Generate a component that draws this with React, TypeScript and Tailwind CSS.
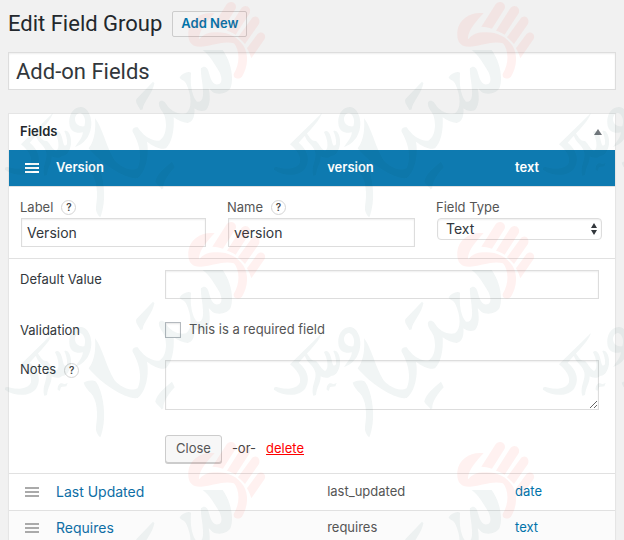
import type { ReactNode } from "react";

type FieldRow = { label: string; name: string; type: string };

const inputClass =
  "w-full border border-[#dddddd] bg-white text-[#32373c] shadow-[inset_0_1px_2px_rgba(0,0,0,0.07)] outline-none";

const collapsedFields: FieldRow[] = [
  { label: "Last Updated", name: "last_updated", type: "date" },
  { label: "Requires", name: "requires", type: "text" },
];

function Help() {
  return (
    <button
      type="button"
      aria-label="Help"
      className="flex size-[15px] items-center justify-center rounded-full border border-[#d5d5d5] text-[10px] font-semibold leading-none text-[#444444]"
    >
      ?
    </button>
  );
}

function Handle() {
  return (
    <svg viewBox="0 0 14 10" className="ml-4 block h-[10px] w-[14px]" fill="currentColor" aria-hidden="true">
      <rect width="14" height="2" />
      <rect y="4" width="14" height="2" />
      <rect y="8" width="14" height="2" />
    </svg>
  );
}

function TopField({ id, label, help, children }: { id: string; label: string; help?: boolean; children: ReactNode }) {
  return (
    <div>
      <div className="flex h-4 items-center gap-2 text-[13px] leading-4 text-[#555555]">
        <label htmlFor={id}>{label}</label>
        {help && <Help />}
      </div>
      <div className="mt-[3px] pl-px">{children}</div>
    </div>
  );
}

function Watermark() {
  return (
    <svg className="pointer-events-none absolute inset-0 size-full" aria-hidden="true">
      <defs>
        <pattern id="mark" x="1" y="0" width="269" height="220" patternUnits="userSpaceOnUse">
          <g fill="#ff2a1a" opacity="0.065" transform="translate(42 0) scale(0.3333)">
            <path d="M515 40C480 34 440 55 436 95C434 126 445 141 475 140C510 138 540 122 573 130C590 150 592 190 572 222C570 237 588 240 597 230C612 205 620 170 602 138C580 105 548 92 500 98C485 101 478 108 468 118C465 95 495 60 515 40Z" />
            <path d="M508 80L550 14C560 -2 584 8 578 26L540 86C530 82 518 80 508 80Z" />
            <path d="M552 92L594 26C605 8 628 22 620 40L578 104C570 99 562 95 552 92Z" />
            <path d="M585 112L625 57C637 40 655 55 648 72L606 132C600 125 592 118 585 112Z" />
            <path d="M612 145L643 103C655 90 672 103 665 117L625 175C622 165 618 155 612 145Z" />
          </g>
          <g fill="#003838" opacity="0.055">
            <g transform="translate(70 40) scale(0.3333)">
              <path d="M395 30L455 30C480 65 490 115 478 145C468 162 440 165 425 156C418 150 415 145 413 145C418 170 418 195 405 210C393 216 380 212 370 205C372 225 368 245 350 249C335 248 320 240 308 232C310 265 305 305 285 325C270 330 245 318 228 305C235 345 225 395 200 414C165 420 90 370 53 325C70 305 75 270 72 235C95 265 105 320 130 360C150 385 185 395 200 385C215 350 205 310 185 275C183 265 190 260 200 262C215 285 240 305 265 302C285 290 290 255 280 225C272 210 262 200 264 188C268 180 275 180 283 188C295 210 320 225 345 220C365 205 362 165 345 130C340 120 328 120 326 112C335 100 350 93 360 98C358 130 360 165 378 185C392 188 398 175 396 150C395 125 388 100 390 85C400 75 410 80 414 100C420 125 430 138 445 132C455 125 452 110 445 95C430 70 415 45 395 30Z" />
              <path d="M246 125L196 178C192 190 205 200 208 210L215 208C215 190 245 160 250 130Z" />
              <path d="M303 365C285 380 255 405 253 425C258 435 268 440 272 448L277 445C275 425 295 400 311 382Z" />
              <path d="M38 368C50 360 68 360 75 365C95 395 103 450 98 490C95 510 92 522 88 532C80 525 74 515 75 500C82 460 78 420 60 400C50 390 42 380 38 368Z" />
            </g>
            <g transform="translate(0 95) scale(0.3333)">
              <path d="M156 54C150 75 118 108 86 143C108 160 122 188 108 216C94 246 40 246 12 224C10 216 16 214 28 218C55 226 84 220 90 202C94 184 80 164 60 148Z" />
              <path d="M104 110C118 118 120 140 138 138C150 150 156 165 166 168C178 160 172 130 162 112C170 102 180 112 184 132C188 150 190 158 198 148C200 132 194 118 190 108C202 102 212 124 210 146C208 166 196 184 184 182C174 192 160 188 152 184C152 204 140 218 138 240L130 242C124 222 132 206 136 188C140 166 128 156 116 142C108 132 102 122 104 110Z" />
              <path
                fillRule="evenodd"
                d="M206 92C200 60 218 34 242 36C270 42 280 90 262 122C252 140 238 150 222 156C230 144 244 130 246 112C224 116 210 108 206 92ZM222 72C222 88 236 96 250 94C256 76 250 58 238 54C228 54 222 62 222 72Z"
              />
              <path d="M170 224C170 206 180 200 190 208L200 204L196 214L180 216L176 228Z" />
            </g>
          </g>
        </pattern>
      </defs>
      <rect width="100%" height="100%" fill="url(#mark)" />
    </svg>
  );
}

export default function App() {
  return (
    <div className="relative h-screen overflow-hidden bg-[#f1f1f1] px-2 pt-[11px] font-['Inter',sans-serif] text-[13px] text-[#444444]">
      <div className="flex items-center gap-[10px]">
        <h1 className="font-['Roboto','Liberation_Sans',sans-serif] text-[22px] leading-[26px] text-[#23282d]">Edit Field Group</h1>
        <button
          type="button"
          className="h-[26px] rounded-[2px] border border-[#cccccc] bg-[#f3f3f3] px-2 text-[13px] font-semibold text-[#0073aa]"
        >
          Add New
        </button>
      </div>

      <input
        type="text"
        aria-label="Field group title"
        defaultValue="Add-on Fields"
        className={`${inputClass} mt-[15px] block h-[38px] px-[7px] font-['Roboto','Liberation_Sans',sans-serif] text-[22px]`}
      />

      <section className="mt-[23px] border border-[#e5e5e5] bg-white shadow-[0_1px_1px_rgba(0,0,0,0.04)]">
        <header className="flex h-9 items-center justify-between pl-[11px] pr-[13px]">
          <h2 className="text-[13px] font-semibold text-[#23282d]">Fields</h2>
          <button type="button" aria-label="Toggle panel" className="text-[#72777c]">
            <svg viewBox="0 0 8 6" className="block h-[6px] w-2" fill="currentColor">
              <path d="M4 0L8 6H0Z" />
            </svg>
          </button>
        </header>

        <table className="w-full table-fixed border-collapse text-left">
          <colgroup>
            <col className="w-[47px]" />
            <col />
            <col className="w-[31%]" />
            <col className="w-[100px]" />
          </colgroup>
          <tbody>
            <tr className="h-9 bg-[#0e7ab0] font-semibold text-white">
              <td>
                <Handle />
              </td>
              <td>Version</td>
              <td>version</td>
              <td>text</td>
            </tr>
            <tr>
              <td colSpan={4} className="p-0">
                <div className="grid grid-cols-[186fr_188fr_166fr] gap-[21px] border-y border-[#e1e1e1] pb-[11px] pl-[11px] pr-[13px] pt-3">
                  <TopField id="label" label="Label" help>
                    <input id="label" type="text" defaultValue="Version" className={`${inputClass} block h-[29px] px-[5px] text-sm`} />
                  </TopField>
                  <TopField id="name" label="Name" help>
                    <input id="name" type="text" defaultValue="version" className={`${inputClass} block h-[29px] px-[5px] text-sm`} />
                  </TopField>
                  <TopField id="type" label="Field Type">
                    <div className="relative">
                      <select id="type" className={`${inputClass} block h-[22px] appearance-none rounded px-2 text-sm leading-5`}>
                        <option>Text</option>
                      </select>
                      <svg
                        viewBox="0 0 6 12"
                        className="pointer-events-none absolute right-[5px] top-[5px] h-3 w-[6px]"
                        fill="#32373c"
                        aria-hidden="true"
                      >
                        <path d="M3 0L6 5H0ZM3 12L0 7H6Z" />
                      </svg>
                    </div>
                  </TopField>
                </div>

                <div className="grid grid-cols-[145px_1fr] border-b border-[#e1e1e1] pb-[10px] pl-[11px] pr-4 pt-[11px] text-[#32373c]">
                  <label htmlFor="default" className="leading-[18px]">
                    Default Value
                  </label>
                  <input id="default" type="text" className={`${inputClass} block h-[29px] px-[5px] text-sm`} />

                  <span className="mt-[22px] leading-[18px]">Validation</span>
                  <div className="mt-[22px] flex h-[18px] items-center gap-2 text-[#555555]">
                    <input
                      id="required"
                      type="checkbox"
                      className="size-4 appearance-none border border-[#b4b9be] bg-white shadow-[inset_0_1px_2px_rgba(0,0,0,0.1)]"
                    />
                    <label htmlFor="required">This is a required field</label>
                  </div>

                  <div className="mt-[21px] flex h-5 items-center gap-2">
                    <label htmlFor="notes">Notes</label>
                    <Help />
                  </div>
                  <textarea id="notes" className={`${inputClass} mt-[21px] block h-[50px] resize-y`} />

                  <div className="col-start-2 mt-[25px] flex items-center gap-[10px]">
                    <button
                      type="button"
                      className="h-7 rounded-[3px] border border-[#cccccc] bg-[#f7f7f7] px-[10px] text-[#555555] shadow-[0_1px_0_#cccccc]"
                    >
                      Close
                    </button>
                    <span className="text-[#444444]">-or-</span>
                    <a href="#delete" className="text-[#ff0000] underline">
                      delete
                    </a>
                  </div>
                </div>
              </td>
            </tr>
            {collapsedFields.map((field) => (
              <tr key={field.name} className="h-9 border-b border-[#e1e1e1] text-[#555555] even:bg-[#fbfbfb]">
                <td className="text-[#aaaaaa]">
                  <Handle />
                </td>
                <td className="text-sm text-[#0e6ea5]">
                  <a href="#edit">{field.label}</a>
                </td>
                <td>{field.name}</td>
                <td className="text-[#0073aa]">{field.type}</td>
              </tr>
            ))}
          </tbody>
        </table>
      </section>

      <Watermark />
    </div>
  );
}
